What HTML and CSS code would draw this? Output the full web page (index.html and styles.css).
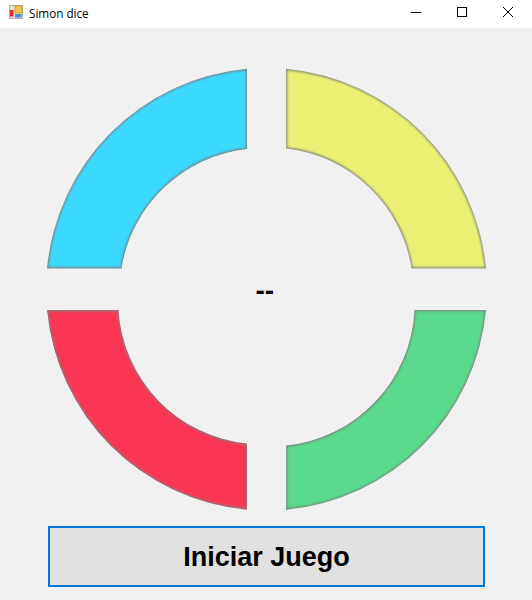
FILE: index.html
```html
<!DOCTYPE html>
<html lang="en">
<head>
    <meta charset="UTF-8">
    <meta name="viewport" content="width=device-width, initial-scale=1.0">
    <title>Simon dice</title>
    <link rel="stylesheet" href="styles.css">
</head>
<body>
    <div class="window">
        <header class="titlebar">
            <svg class="app-icon" width="16" height="16" viewBox="0 0 16 16">
                <rect x="1.5" y="1.5" width="13" height="13" fill="#e2e2e2" stroke="#b0b0b0"/>
                <rect x="7" y="2" width="7" height="7" fill="#f6c544" stroke="#c99a1c" stroke-width="0.8"/>
                <rect x="2" y="6" width="3.5" height="6.5" fill="#d8322a"/>
                <rect x="7" y="10" width="6.5" height="3.5" fill="#4d86d8"/>
            </svg>
            <span class="app-title">Simon dice</span>
            <div class="controls">
                <svg class="control" width="46" height="28" viewBox="0 0 46 28"><path d="M18 12.5H28" stroke="#000" fill="none"/></svg>
                <svg class="control" width="46" height="28" viewBox="0 0 46 28"><rect x="18.5" y="7.5" width="9" height="9" stroke="#000" fill="none"/></svg>
                <svg class="control" width="46" height="28" viewBox="0 0 46 28"><path d="M18 7L28 17M28 7L18 17" stroke="#000" fill="none"/></svg>
            </div>
        </header>

        <main class="board">
            <svg class="pads" width="532" height="498" viewBox="0 28 532 498">
                <defs>
                    <filter id="soft" x="-10%" y="-10%" width="120%" height="120%">
                        <feGaussianBlur stdDeviation="1.3"/>
                    </filter>
                    <path id="padBlue" d="M47 268.5A221 221 0 0 1 247 68.8V149A143 143 0 0 0 121.5 268.5Z"/>
                    <path id="padYellow" d="M286 68.8A221 221 0 0 1 486 268.5H411.5A143 143 0 0 0 286 148.5Z"/>
                    <path id="padRed" d="M47 310H118.5A143 143 0 0 0 247 443.5V509.7A221 221 0 0 1 47 310Z"/>
                    <path id="padGreen" d="M414.5 310H486A221 221 0 0 1 286 509.7V445.5A143 143 0 0 0 414.5 310Z"/>
                    <clipPath id="clipBlue"><use href="#padBlue"/></clipPath>
                    <clipPath id="clipYellow"><use href="#padYellow"/></clipPath>
                    <clipPath id="clipRed"><use href="#padRed"/></clipPath>
                    <clipPath id="clipGreen"><use href="#padGreen"/></clipPath>
                </defs>
                <g clip-path="url(#clipBlue)">
                    <use href="#padBlue" fill="#3bd8ff"/>
                    <use href="#padBlue" fill="none" stroke="#808080" stroke-width="2.4" filter="url(#soft)"/>
                </g>
                <g clip-path="url(#clipYellow)">
                    <use href="#padYellow" fill="#e9f074"/>
                    <use href="#padYellow" fill="none" stroke="#808080" stroke-width="2.4" filter="url(#soft)"/>
                </g>
                <g clip-path="url(#clipRed)">
                    <use href="#padRed" fill="#fb3654"/>
                    <use href="#padRed" fill="none" stroke="#808080" stroke-width="2.4" filter="url(#soft)"/>
                </g>
                <g clip-path="url(#clipGreen)">
                    <use href="#padGreen" fill="#5ada8c"/>
                    <use href="#padGreen" fill="none" stroke="#808080" stroke-width="2.4" filter="url(#soft)"/>
                </g>
            </svg>
            <div class="score">--</div>
            <button class="start" type="button">Iniciar Juego</button>
        </main>
    </div>
</body>
</html>
```

FILE: styles.css
```css
html, body {
    margin: 0;
    padding: 0;
}
body {
    background-color: #f0f0f0;
    font-family: "Liberation Sans", Arial, sans-serif;
}
.window {
    width: 532px;
    height: 600px;
    overflow: hidden;
}
.titlebar {
    display: flex;
    align-items: center;
    height: 28px;
    background-color: #fff;
}
.app-icon {
    margin-left: 8px;
    margin-right: 5px;
    margin-bottom: 4px;
}
.app-title {
    margin-bottom: 3px;
    font-family: "Open Sans", "Noto Sans", sans-serif;
    font-size: 11.7px;
    color: #000;
}
.controls {
    display: flex;
    margin-left: auto;
    margin-right: 1px;
}
.control {
    display: block;
}
.board {
    position: relative;
    background-color: #f0f0f0;
}
.pads {
    display: block;
}
.score {
    position: absolute;
    left: 255.5px;
    top: 247px;
    font-size: 28px;
    font-weight: bold;
    color: #000;
}
.start {
    display: block;
    box-sizing: border-box;
    width: 437px;
    height: 61px;
    margin-left: 48px;
    padding: 1px 0 0;
    border: 2px solid #0078d7;
    background-color: #e1e1e1;
    color: #000;
    font-family: "Liberation Sans", Arial, sans-serif;
    font-size: 27px;
    font-weight: bold;
}
```
